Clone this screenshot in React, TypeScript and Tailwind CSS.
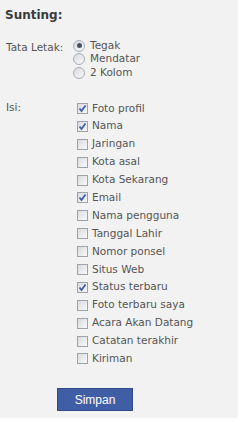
import React from 'react';

const LAYOUTS = [
    { label: 'Tegak', checked: true },
    { label: 'Mendatar', checked: false },
    { label: '2 Kolom', checked: false },
];

const FIELDS = [
    { label: 'Foto profil', checked: true },
    { label: 'Nama', checked: true },
    { label: 'Jaringan', checked: false },
    { label: 'Kota asal', checked: false },
    { label: 'Kota Sekarang', checked: false },
    { label: 'Email', checked: true },
    { label: 'Nama pengguna', checked: false },
    { label: 'Tanggal Lahir', checked: false },
    { label: 'Nomor ponsel', checked: false },
    { label: 'Situs Web', checked: false },
    { label: 'Status terbaru', checked: true },
    { label: 'Foto terbaru saya', checked: false },
    { label: 'Acara Akan Datang', checked: false },
    { label: 'Catatan terakhir', checked: false },
    { label: 'Kiriman', checked: false },
];

const Radio = ({ checked }: { checked: boolean }) => (
    <span className="w-[12px] h-[12px] rounded-full border border-[#a9aeb6] bg-gradient-to-br from-[#d8dbe0] to-[#f8f8f8] flex items-center justify-center shrink-0">
        {checked && <span className="w-[5px] h-[5px] rounded-full bg-[#4a5260]" />}
    </span>
);

const Checkbox = ({ checked }: { checked: boolean }) => (
    <span className="w-[11px] h-[11px] border border-[#9ca3ad] bg-gradient-to-br from-[#d8dbe0] to-[#f9f9f9] flex items-center justify-center shrink-0">
        {checked && (
            <svg width="9" height="9" viewBox="0 0 9 9">
                <path d="M1.5 4.5 L3.5 7 L7.5 1.5" fill="none" stroke="#3f5fb0" strokeWidth="1.8" />
            </svg>
        )}
    </span>
);

export default function App() {
    return (
        <div className="w-[243px] h-[422px] bg-white font-['DejaVu_Sans',sans-serif]">
            <div className="w-[238px] h-[418px] bg-[#f2f2f2] pl-[5px] pt-[8px]">
                <h1 className="text-[12px] leading-[15px] font-bold text-[#3a3a3a]">Sunting:</h1>

                {/* Tata letak */}
                <div className="flex mt-[16px]">
                    <div className="w-[68px] pl-[1px] text-[10.5px] leading-[14px] text-[#555] whitespace-nowrap pt-[1px]">Tata Letak:</div>
                    <div className="flex flex-col">
                        {LAYOUTS.map((opt) => (
                            <label key={opt.label} className="h-[13.5px] flex items-center gap-[5px] text-[10.5px] text-[#555]">
                                <Radio checked={opt.checked} />
                                <span>{opt.label}</span>
                            </label>
                        ))}
                    </div>
                </div>

                {/* Isi */}
                <div className="flex mt-[20px]">
                    <div className="w-[72px] pl-[1px] text-[10.5px] leading-[14px] text-[#555]">Isi:</div>
                    <div className="flex flex-col">
                        {FIELDS.map((f) => (
                            <label key={f.label} className="h-[17.9px] flex items-center gap-[4px] text-[10.5px] text-[#555] whitespace-nowrap">
                                <Checkbox checked={f.checked} />
                                <span>{f.label}</span>
                            </label>
                        ))}
                    </div>
                </div>

                <div className="pl-[52px] mt-[19px]">
                    <button className="w-[76px] h-[23px] bg-[#3f5ea6] border border-[#2f4a8a] text-white text-[12px] font-['Liberation_Sans',sans-serif]">
                        Simpan
                    </button>
                </div>
            </div>
        </div>
    );
}
